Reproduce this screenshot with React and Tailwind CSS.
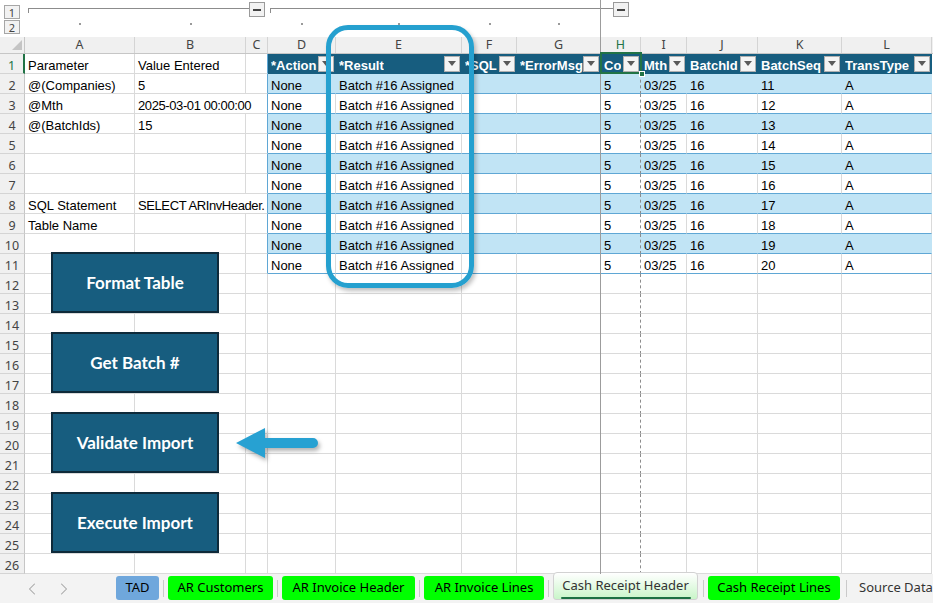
import React from 'react';
import { ChevronLeft, ChevronRight } from 'lucide-react';

const COLS = [
  { id: 'A', w: 'w-[110px]', dot: true },
  { id: 'B', w: 'w-[111px]', dot: true },
  { id: 'C', w: 'w-[22px]', dot: false },
  { id: 'D', w: 'w-[68px]', dot: true },
  { id: 'E', w: 'w-[126px]', dot: true },
  { id: 'F', w: 'w-[55px]', dot: true },
  { id: 'G', w: 'w-[84px]', dot: true },
  { id: 'H', w: 'w-[40px]', dot: false },
  { id: 'I', w: 'w-[46px]', dot: false },
  { id: 'J', w: 'w-[71px]', dot: false },
  { id: 'K', w: 'w-[84px]', dot: false },
  { id: 'L', w: 'w-[90px]', dot: false },
];

const TABLE_COLS = COLS.slice(3);

const params = {
  1: ['Parameter', 'Value Entered'],
  2: ['@(Companies)', '5'],
  3: ['@Mth', '2025-03-01 00:00:00'],
  4: ['@(BatchIds)', '15'],
  8: ['SQL Statement', 'SELECT ARInvHeader.'],
  9: ['Table Name', ''],
};

// B overflows into empty C on these rows
const mergedBC = [3, 8];

const headers = ['*Action', '*Result', '*SQL', '*ErrorMsg', 'Co', 'Mth', 'BatchId', 'BatchSeq', 'TransType'];

const rowData = (r) => ['None', 'Batch #16 Assigned', '', '', '5', '03/25', '16', String(r + 9), 'A'];

const ROWS = Array.from({ length: 26 }, (_, i) => i + 1);

const cell = (w, right, bottom, extra = '') =>
  `${w} shrink-0 h-full border-r border-b flex items-end leading-[15px] px-[3px] overflow-hidden whitespace-nowrap ${right} ${bottom} ${extra}`;

const Dropdown = () => (
  <span className="ml-auto self-center w-[16px] h-[16px] shrink-0 bg-[#f4f4f4] border border-[#b0b0b0] flex items-center justify-center">
    <svg width="8" height="5" viewBox="0 0 8 5">
      <path d="M0 0h8L4 5z" fill="#5a5a5a" />
    </svg>
  </span>
);

const LevelBtn = ({ n }) => (
  <div className="w-[16px] h-[14px] border border-[#a6a6a6] bg-[#f2f2f2] text-[11px] leading-none text-[#444] flex items-center justify-center font-['Noto_Sans',sans-serif]">
    {n}
  </div>
);

const Collapse = () => (
  <div className="mt-[2px] w-[16px] h-[15px] shrink-0 border border-[#9a9a9a] bg-[#f2f2f2] flex items-center justify-center">
    <div className="w-[8px] h-[2px] bg-[#444]" />
  </div>
);

const Outline = () => (
  <div className="flex h-[37px]">
    <div className="w-[25px] shrink-0 flex flex-col gap-[1px] pl-[4px] pt-[5px]">
      <LevelBtn n={1} />
      <LevelBtn n={2} />
    </div>
    <div className="flex flex-col">
      <div className="flex h-[18px] items-start">
        <div className="ml-[3px] mt-[8px] w-[221px] h-[5px] border-t-[1.5px] border-l-[1.5px] border-[#8c8c8c]" />
        <Collapse />
        <div className="ml-[5px] mt-[8px] w-[343px] h-[5px] border-t-[1.5px] border-l-[1.5px] border-[#8c8c8c]" />
        <Collapse />
      </div>
      <div className="flex h-[19px]">
        {COLS.map((c) => (
          <div key={c.id} className={`${c.w} shrink-0 flex justify-center pt-[5px]`}>
            {c.dot && <span className="w-[2px] h-[2px] bg-[#9a9a9a]" />}
          </div>
        ))}
      </div>
    </div>
  </div>
);

const ColumnHeader = () => (
  <div className="flex h-[17px] bg-[#f0f0f0] border-b border-b-[#c6c6c6] font-['Noto_Sans',sans-serif] text-[12.5px]">
    <div className="w-[25px] shrink-0 border-r border-r-[#c6c6c6] flex items-end justify-end pr-[2px] pb-[3px]">
      <svg width="10" height="10" viewBox="0 0 10 10">
        <path d="M10 0V10H0z" fill="#c4c4c4" />
      </svg>
    </div>
    {COLS.map((c) => (
      <div
        key={c.id}
        className={`${c.w} shrink-0 border-r border-r-[#d4d4d4] flex items-center justify-center leading-none ${c.id === 'H' ? 'text-[#217346]' : 'text-[#444]'}`}
      >
        {c.id}
      </div>
    ))}
  </div>
);

const Row = ({ r }) => {
  const inTable = r <= 11;
  const band = r >= 2 && r <= 11 && r % 2 === 0;
  const merged = mergedBC.includes(r);
  const [a, b] = params[r] || ['', ''];
  const cRight = inTable ? 'border-r-[#5fa7d5]' : 'border-r-[#dadada]';

  return (
    <div className="flex h-[20px]">
      <div
        className={`w-[25px] shrink-0 h-full bg-[#f0f0f0] border-b border-b-[#d4d4d4] flex items-end justify-center leading-[15px] font-['Noto_Sans',sans-serif] text-[12.5px] ${
          r === 1 ? 'text-[#217346] border-r-2 border-r-[#217346]' : 'text-[#444] border-r border-r-[#c6c6c6]'
        }`}
      >
        {r}
      </div>
      <div className={cell('w-[110px]', 'border-r-[#dadada]', 'border-b-[#dadada]')}>{a}</div>
      {merged ? (
        <div className={cell('w-[133px]', cRight, 'border-b-[#dadada]', 'tracking-[-0.4px]')}>{b}</div>
      ) : (
        <>
          <div className={cell('w-[111px]', 'border-r-[#dadada]', 'border-b-[#dadada]')}>{b}</div>
          <div className={cell('w-[22px]', cRight, 'border-b-[#dadada]')} />
        </>
      )}
      {TABLE_COLS.map((c, i) => {
        if (r === 1) {
          return (
            <div
              key={c.id}
              className={`${c.w} shrink-0 h-full relative bg-[#175d7f] border-b border-b-[#175d7f] flex items-end leading-[15px] pl-[3px] pr-[2px] whitespace-nowrap text-white font-bold`}
            >
              <span className="overflow-hidden">{headers[i]}</span>
              <Dropdown />
              {c.id === 'H' && (
                <>
                  <div className="absolute -left-[1px] -top-[2px] -right-[1px] -bottom-[1px] border-2 border-[#217346] z-10" />
                  <div className="absolute -right-[4px] -bottom-[4px] w-[6px] h-[6px] bg-[#217346] border border-white z-10" />
                </>
              )}
            </div>
          );
        }
        const text = inTable ? rowData(r)[i] : '';
        let right = 'border-r-[#dadada]';
        if (band) right = 'border-r-[#c1e4f5]';
        if (c.id === 'H') right = 'border-r-[#8c8c8c] [border-right-style:dashed]';
        const bottom = inTable ? 'border-b-[#5fa7d5]' : 'border-b-[#dadada]';
        return (
          <div key={c.id} className={cell(c.w, right, bottom, band ? 'bg-[#c1e4f5]' : '')}>
            {text}
          </div>
        );
      })}
    </div>
  );
};

const Tab = ({ label, w, bg }) => (
  <div className={`${w} ${bg} shrink-0 mt-[2px] h-[24px] rounded-[3px] flex items-center justify-center text-black`}>
    {label}
  </div>
);

const Sep = ({ w = 'w-[9px]' }) => (
  <div className={`${w} shrink-0 flex justify-center pt-[6px]`}>
    <div className="w-px h-[17px] bg-[#cacaca]" />
  </div>
);

const TabBar = () => (
  <div className="flex h-[29px] bg-[#f3f3f3] font-['Noto_Sans',sans-serif] text-[13px] whitespace-nowrap">
    <div className="w-[116px] shrink-0 flex items-center pl-[22px]">
      <ChevronLeft size={20} strokeWidth={1.25} className="text-[#a3a3a3]" />
      <ChevronRight size={20} strokeWidth={1.25} className="ml-[12px] text-[#a3a3a3]" />
    </div>
    <Tab label="TAD" w="w-[43px]" bg="bg-[#6fa7dc]" />
    <Sep />
    <Tab label="AR Customers" w="w-[105px]" bg="bg-[#00ff00]" />
    <Sep />
    <Tab label="AR Invoice Header" w="w-[133px]" bg="bg-[#00ff00]" />
    <Sep />
    <Tab label="AR Invoice Lines" w="w-[120px]" bg="bg-[#00ff00]" />
    <Sep />
    <div className="relative w-[145px] shrink-0 -mt-[2px] h-[28px] rounded-t-[4px] rounded-b-[3px] border border-[#d2d2d2] bg-gradient-to-b from-white to-[#c9f5c9] flex flex-col items-center pt-[2px] text-[#333]">
      <span className="leading-[20px]">Cash Receipt Header</span>
      <div className="mt-[2px] w-[130px] h-[2px] rounded-full bg-[#1d7044]" />
    </div>
    <Sep w="w-[10px]" />
    <Tab label="Cash Receipt Lines" w="w-[132px]" bg="bg-[#00ff00]" />
    <Sep w="w-[12px]" />
    <div className="pl-[7px] mt-[2px] h-[24px] flex items-center text-[#333]">Source Data</div>
  </div>
);

const buttons = [
  { label: 'Format Table', top: 'top-[252px]' },
  { label: 'Get Batch #', top: 'top-[332px]' },
  { label: 'Validate Import', top: 'top-[412px]' },
  { label: 'Execute Import', top: 'top-[492px]' },
];

export default function App() {
  return (
    <div className="relative w-[933px] h-[603px] overflow-hidden bg-white font-['Liberation_Sans',Arial,sans-serif] text-[13px] text-black">
      <Outline />
      <ColumnHeader />
      {ROWS.map((r) => (
        <Row key={r} r={r} />
      ))}
      <TabBar />

      {/* freeze pane line */}
      <div className="absolute left-[600px] top-0 h-[574px] w-px bg-[#9c9c9c]" />

      {/* callout around Result column */}
      <div className="absolute left-[326px] top-[25px] w-[148px] h-[263px] rounded-[22px] border-[5px] border-[#25a0cf] shadow-[2px_3px_4px_rgba(0,0,0,0.25)]" />

      {/* macro buttons */}
      {buttons.map((b) => (
        <div
          key={b.label}
          className={`absolute left-[51px] ${b.top} w-[168px] h-[61px] bg-[#175d7f] border-2 border-[#0e2a3a] flex items-center justify-center text-white font-bold text-[17px] font-['Lato',sans-serif]`}
        >
          {b.label}
        </div>
      ))}

      {/* arrow pointing at Validate Import */}
      <svg
        className="absolute left-[233px] top-[424px] drop-shadow-[2px_3px_2px_rgba(0,0,0,0.3)]"
        width="90"
        height="40"
        viewBox="0 0 90 40"
      >
        <path d="M3 19 L32 4 L32 14 L80 14 A5 5 0 0 1 80 24 L32 24 L32 34 Z" fill="#27a1d2" />
      </svg>
    </div>
  );
}
